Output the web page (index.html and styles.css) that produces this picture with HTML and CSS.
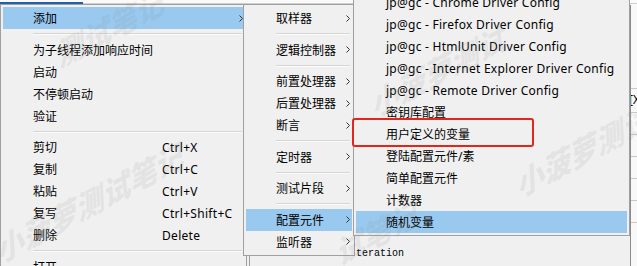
FILE: index.html
```html
<!DOCTYPE html>
<html lang="zh-CN">
<head>
<meta charset="utf-8">
<title>JMeter 右键菜单</title>
<link rel="stylesheet" href="styles.css">
</head>
<body>
<div class="app">
  <div class="topbar"><span class="tab"></span><span class="rest"></span></div>
  <div class="content">
    <div class="main">
      <div class="bottom-row">
        <div class="cell"></div>
        <div class="txt">teration</div>
      </div>
    </div>
    <div class="strip">
      <div class="srow"></div>
      <div class="srow tall"><span class="sx">[X</span></div>
      <div class="srow"></div>
      <div class="srow"></div>
      <div class="srow"></div>
      <div class="srow"></div>
      <div class="srow"></div>
    </div>
  </div>
</div>

<div class="menus">
  <div class="menu m1">
    <div class="item hl"><span class="label">添加</span><svg class="arrow" viewBox="0 0 4 7"><path d="M0.5 0.5 L3.5 3.5 L0.5 6.5" fill="none" stroke="#333" stroke-width="1"/></svg></div>
    <div class="sep"></div>
    <div class="item"><span class="label">为子线程添加响应时间</span></div>
    <div class="item"><span class="label">启动</span></div>
    <div class="item"><span class="label">不停顿启动</span></div>
    <div class="item"><span class="label">验证</span></div>
    <div class="sep"></div>
    <div class="item"><span class="label">剪切</span><span class="key">Ctrl+X</span></div>
    <div class="item"><span class="label">复制</span><span class="key">Ctrl+C</span></div>
    <div class="item"><span class="label">粘贴</span><span class="key">Ctrl+V</span></div>
    <div class="item"><span class="label">复写</span><span class="key">Ctrl+Shift+C</span></div>
    <div class="item"><span class="label">删除</span><span class="key">Delete</span></div>
    <div class="sep"></div>
    <div class="item"><span class="label">打开</span></div>
  </div>

  <div class="menu m2">
    <div class="item"><span class="label">取样器</span><svg class="arrow" viewBox="0 0 4 7"><path d="M0.5 0.5 L3.5 3.5 L0.5 6.5" fill="none" stroke="#333" stroke-width="1"/></svg></div>
    <div class="sep"></div>
    <div class="item"><span class="label">逻辑控制器</span><svg class="arrow" viewBox="0 0 4 7"><path d="M0.5 0.5 L3.5 3.5 L0.5 6.5" fill="none" stroke="#333" stroke-width="1"/></svg></div>
    <div class="sep"></div>
    <div class="item"><span class="label">前置处理器</span><svg class="arrow" viewBox="0 0 4 7"><path d="M0.5 0.5 L3.5 3.5 L0.5 6.5" fill="none" stroke="#333" stroke-width="1"/></svg></div>
    <div class="item"><span class="label">后置处理器</span><svg class="arrow" viewBox="0 0 4 7"><path d="M0.5 0.5 L3.5 3.5 L0.5 6.5" fill="none" stroke="#333" stroke-width="1"/></svg></div>
    <div class="item"><span class="label">断言</span><svg class="arrow" viewBox="0 0 4 7"><path d="M0.5 0.5 L3.5 3.5 L0.5 6.5" fill="none" stroke="#333" stroke-width="1"/></svg></div>
    <div class="sep"></div>
    <div class="item"><span class="label">定时器</span><svg class="arrow" viewBox="0 0 4 7"><path d="M0.5 0.5 L3.5 3.5 L0.5 6.5" fill="none" stroke="#333" stroke-width="1"/></svg></div>
    <div class="sep"></div>
    <div class="item"><span class="label">测试片段</span><svg class="arrow" viewBox="0 0 4 7"><path d="M0.5 0.5 L3.5 3.5 L0.5 6.5" fill="none" stroke="#333" stroke-width="1"/></svg></div>
    <div class="sep"></div>
    <div class="item hl"><span class="label">配置元件</span><svg class="arrow" viewBox="0 0 4 7"><path d="M0.5 0.5 L3.5 3.5 L0.5 6.5" fill="none" stroke="#333" stroke-width="1"/></svg></div>
    <div class="item"><span class="label">监听器</span><svg class="arrow" viewBox="0 0 4 7"><path d="M0.5 0.5 L3.5 3.5 L0.5 6.5" fill="none" stroke="#333" stroke-width="1"/></svg></div>
  </div>

  <div class="menu m3">
    <div class="item"><span class="label en">jp@gc - Chrome Driver Config</span></div>
    <div class="item"><span class="label en">jp@gc - Firefox Driver Config</span></div>
    <div class="item"><span class="label en">jp@gc - HtmlUnit Driver Config</span></div>
    <div class="item"><span class="label en">jp@gc - Internet Explorer Driver Config</span></div>
    <div class="item"><span class="label en">jp@gc - Remote Driver Config</span></div>
    <div class="item"><span class="label">密钥库配置</span></div>
    <div class="item"><span class="label">用户定义的变量</span></div>
    <div class="item"><span class="label">登陆配置元件/素</span></div>
    <div class="item"><span class="label">简单配置元件</span></div>
    <div class="item"><span class="label">计数器</span></div>
    <div class="item hl"><span class="label">随机变量</span></div>
  </div>
</div>

<div class="callout"></div>

<div class="wm wm1">小菠萝测试笔记</div>
<div class="wm wm2">测试笔记</div>
<div class="wm wm3">小菠萝测试</div>
<div class="wm wm4">小菠萝测试</div>
<div class="wm wm5">试笔记</div>
</body>
</html>
```

FILE: styles.css
```css
* { box-sizing: border-box; }
html, body { margin: 0; padding: 0; }
body {
  width: 637px;
  height: 266px;
  overflow: hidden;
  position: relative;
  background: #f0f0f0;
  font-family: "Noto Sans", "Noto Sans CJK SC", sans-serif;
  font-size: 12px;
  color: #000;
}

/* background application */
.app { display: flex; flex-direction: column; height: 266px; }
.topbar { height: 5px; display: flex; align-items: flex-start; padding-top: 2px; background: #fafafa; }
.topbar .tab { width: 83px; height: 2px; background: #2160a8; }
.topbar .rest { flex: 1; height: 1px; margin-top: 1px; background: #cfcfcf; }
.content { flex: 1; display: flex; }
.main { flex: 1; display: flex; flex-direction: column; justify-content: flex-end; }
.bottom-row { height: 19px; display: flex; }
.bottom-row .cell { width: 250px; border-right: 1px solid #a0a0a0; }
.bottom-row .txt {
  padding-left: 106px;
  font-family: "Liberation Mono", monospace;
  font-size: 10px;
  line-height: 13px;
}
.strip { width: 7px; border-left: 1px solid #8a8a8a; background: #f8f8f8; display: flex; flex-direction: column; padding-top: 62px; }
.srow { height: 22px; border-bottom: 1px solid #c8c8c8; }
.srow.tall { height: 24px; overflow: hidden; }
.sx { font-size: 12px; line-height: 22px; margin-left: -2px; }

/* popup menus */
.menus { position: absolute; left: 0; top: 0; display: flex; align-items: flex-start; }
.menu {
  position: relative;
  background: #f0f0f0;
  border: 1px solid #a0a0a0;
  padding: 2px;
}
.m1 { width: 247px; margin-top: 4px; z-index: 1; }
.m2 { width: 112px; margin-top: 4px; margin-left: -4px; z-index: 2; }
.m3 { width: 277px; margin-top: -12px; margin-left: -2px; z-index: 3; }

.item {
  height: 22px;
  display: flex;
  align-items: center;
  padding-left: 30px;
  padding-right: 2px;
  white-space: nowrap;
}
.item.hl { background: #99c9ef; }
.label { flex: 1; }
.m1 .label { flex: 0 0 129px; }
.key { flex: 1; letter-spacing: 0.3px; }
.en { letter-spacing: 0.25px; }
.arrow { width: 4px; height: 7px; margin-left: auto; flex: none; }
.m1 .arrow { margin-right: -1px; }

.sep { height: 9.5px; display: flex; align-items: center; padding-left: 30px; padding-right: 2px; }
.sep::before { content: ""; flex: 1; height: 1px; background: #d5d5d5; box-shadow: 0 1px 0 #fbfbfb; }

/* annotation */
.callout {
  position: absolute;
  left: 352px;
  top: 118px;
  width: 182px;
  height: 29px;
  border: 2.5px solid #e2261b;
  border-radius: 3px;
  z-index: 5;
}

/* watermark */
.wm {
  position: absolute;
  font-family: "Noto Sans CJK SC", sans-serif;
  font-weight: 900;
  font-style: italic;
  font-size: 30px;
  line-height: 30px;
  color: rgba(140, 140, 140, 0.12);
  transform-origin: 0 100%;
  transform: rotate(-28deg) skewX(-12deg);
  white-space: nowrap;
  z-index: 6;
  pointer-events: none;
}
.wm1 { left: 0; top: 236px; }
.wm2 { left: 60px; top: 40px; }
.wm3 { left: 375px; top: 90px; }
.wm4 { left: 520px; top: 170px; }
.wm5 { left: 340px; top: 238px; }
```
